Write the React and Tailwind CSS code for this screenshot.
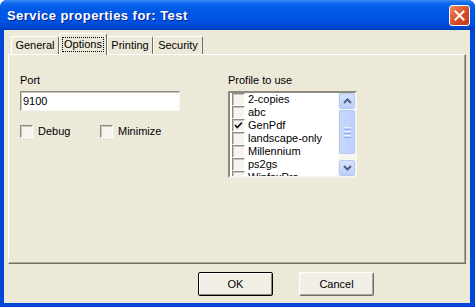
import React from "react";

const PROFILES = [
  { name: "2-copies", checked: false },
  { name: "abc", checked: false },
  { name: "GenPdf", checked: true },
  { name: "landscape-only", checked: false },
  { name: "Millennium", checked: false },
  { name: "ps2gs", checked: false },
  { name: "WinfaxPro", checked: false },
];

const TABS = [
  { label: "General", width: "w-[48px]" },
  { label: "Options", width: "w-[48px]", active: true },
  { label: "Printing", width: "w-[46px]" },
  { label: "Security", width: "w-[50px]" },
];

function CheckBox({ checked }) {
  return (
    <span className="flex w-[13px] h-[13px] shrink-0 border border-t-[#8d8b80] border-l-[#8d8b80] border-b-white border-r-white bg-[#f5f4ef] shadow-[inset_1px_1px_0_#c9c6b9]">
      {checked && (
        <svg width="11" height="11" viewBox="0 0 11 11">
          <path d="M2 5 L4.3 7.5 L9 2.5" fill="none" stroke="#111" strokeWidth="1.8" />
        </svg>
      )}
    </span>
  );
}

function ScrollArrow({ up }) {
  return (
    <div className="h-[16px] flex items-center justify-center rounded-[2px] border border-[#b6c9f4] bg-[linear-gradient(to_bottom,#d6e2fd,#bccffa)]">
      <svg width="9" height="6" viewBox="0 0 9 6">
        <path
          d={up ? "M1 5 L4.5 1.5 L8 5" : "M1 1 L4.5 4.5 L8 1"}
          fill="none"
          stroke="#4d6185"
          strokeWidth="2"
        />
      </svg>
    </div>
  );
}

function DialogButton({ children, isDefault }) {
  return (
    <button
      className={`w-[75px] h-[24px] flex items-center justify-center text-[11px] text-black bg-[#f1efe6] rounded-[2px] ${
        isDefault
          ? "border border-black shadow-[inset_1px_1px_0_#fff,inset_-1px_-1px_0_#8c8a80]"
          : "border border-t-white border-l-white border-b-[#716f64] border-r-[#716f64] shadow-[inset_-1px_-1px_0_#aca899]"
      }`}
    >
      {children}
    </button>
  );
}

export default function App() {
  return (
    <div className="w-[475px] h-[307px] flex flex-col rounded-t-[7px] overflow-hidden bg-[#0046d9] font-['Liberation_Sans',Arial,sans-serif] text-[11px] leading-[13px] text-black">
      {/* Title bar */}
      <div className="h-[30px] shrink-0 flex items-center pl-[7px] pr-[5px] bg-[linear-gradient(to_bottom,#3d8cf7_0%,#0a66ec_12%,#0058e6_35%,#0054e3_65%,#0049d6_88%,#003bb8_100%)]">
        <span className="text-white font-bold text-[13px] tracking-[0.45px] [text-shadow:1px_1px_0_#0a1f8f]">
          Service properties for: Test
        </span>
        <div className="ml-auto w-[21px] h-[21px] flex items-center justify-center rounded-[3px] border border-white bg-[linear-gradient(135deg,#f0906a,#d9502c_50%,#c13b16)]">
          <svg width="11" height="11" viewBox="0 0 11 11">
            <path d="M1.5 1.5 L9.5 9.5 M9.5 1.5 L1.5 9.5" stroke="#fff" strokeWidth="2" strokeLinecap="square" />
          </svg>
        </div>
      </div>

      {/* Client area */}
      <div className="flex-1 flex flex-col ml-[4px] mr-[5px] mb-[4px] bg-[#ece9d8] px-[4px] pt-[3px]">
        {/* Tabs */}
        <div className="h-[21px] flex items-end pl-[3px]">
          {TABS.map((t) =>
            t.active ? (
              <div
                key={t.label}
                className={`${t.width} h-[22px] -mb-[1px] relative z-10 flex items-start justify-center pt-[3px] bg-[#ece9d8] border-t border-l border-t-white border-l-white border-r border-r-[#716f64] rounded-t-[2px]`}
              >
                <span className="border border-dotted border-black px-[1px] h-[15px] leading-[13px]">
                  {t.label}
                </span>
              </div>
            ) : (
              <div
                key={t.label}
                className={`${t.width} h-[18px] flex items-center justify-center border-t border-l border-t-white border-l-white border-r border-r-[#716f64] rounded-t-[2px]`}
              >
                {t.label}
              </div>
            )
          )}
        </div>

        {/* Panel */}
        <div className="h-[210px] flex border border-t-white border-l-white border-r-[#716f64] border-b-[#716f64] shadow-[inset_-1px_-1px_0_#aca899] pl-[11px] pt-[19px]">
          {/* Left column */}
          <div className="w-[160px] flex flex-col">
            <div className="h-[13px]">Port</div>
            <div className="mt-[4px] h-[20px] flex items-center pl-[2px] bg-white border border-t-[#8d8b80] border-l-[#8d8b80] border-b-[#f5f4ef] border-r-[#f5f4ef] shadow-[inset_1px_1px_0_#c9c6b9]">
              9100
            </div>
            <div className="mt-[14px] flex items-center">
              <div className="w-[80px] flex items-center">
                <CheckBox />
                <span className="ml-[5px]">Debug</span>
              </div>
              <div className="flex items-center">
                <CheckBox />
                <span className="ml-[5px]">Minimize</span>
              </div>
            </div>
          </div>

          {/* Right column */}
          <div className="ml-[48px] flex flex-col">
            <div className="h-[13px]">Profile to use</div>
            <div className="mt-[4px] w-[129px] h-[87px] flex bg-white border-2 border-t-[#8d8b80] border-l-[#8d8b80] border-b-[#f5f4ef] border-r-[#f5f4ef] overflow-hidden">
              <div className="flex-1 flex flex-col pl-[2px] overflow-hidden">
                {PROFILES.map((p) => (
                  <div key={p.name} className="h-[13px] shrink-0 flex items-center">
                    <CheckBox checked={p.checked} />
                    <span className="ml-[3px] whitespace-nowrap">{p.name}</span>
                  </div>
                ))}
              </div>
              <div className="w-[17px] flex flex-col bg-[#f7f6f1] pl-[1px]">
                <ScrollArrow up />
                <div className="mt-[1px] h-[44px] flex flex-col items-center justify-center gap-[1px] rounded-[2px] border border-[#b6c9f4] bg-[linear-gradient(to_right,#c7d7fc,#bcd0fb)]">
                  <span className="w-[7px] h-[1px] bg-[#eef3fe]" />
                  <span className="w-[7px] h-[1px] bg-[#8caef5]" />
                  <span className="w-[7px] h-[1px] bg-[#eef3fe]" />
                  <span className="w-[7px] h-[1px] bg-[#8caef5]" />
                  <span className="w-[7px] h-[1px] bg-[#eef3fe]" />
                  <span className="w-[7px] h-[1px] bg-[#8caef5]" />
                </div>
                <div className="flex-1" />
                <ScrollArrow />
              </div>
            </div>
          </div>
        </div>

        {/* Buttons */}
        <div className="mt-[8px] flex pl-[190px] gap-[26px]">
          <DialogButton isDefault>OK</DialogButton>
          <DialogButton>Cancel</DialogButton>
        </div>
      </div>
    </div>
  );
}
